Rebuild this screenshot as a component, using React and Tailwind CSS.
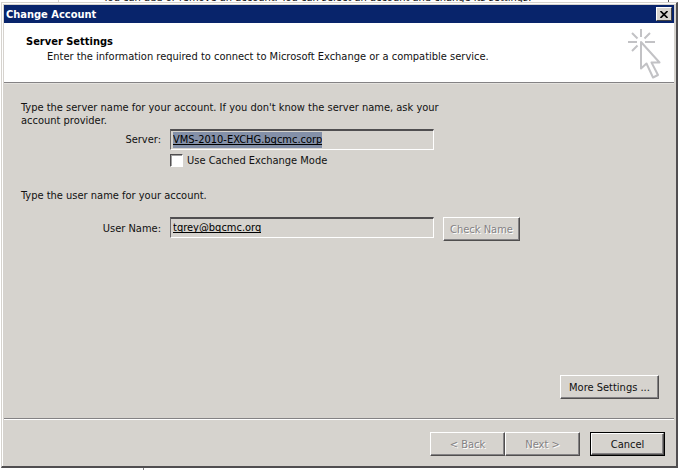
const raised =
  "h-6 border border-t-white border-l-white border-r-[#504e4e] border-b-[#504e4e] bg-[#d6d3ce] shadow-[inset_-1px_-1px_0_#848284] text-center";
const disabledText = "text-[#848284] [text-shadow:1px_1px_0_#fff]";
const sunken =
  "flex h-[21px] w-[264px] items-start border-t-2 border-l border-r border-b border-t-[#504e50] border-l-[#6a686a] border-r-white border-b-white bg-[#d6d3ce] pt-px pl-0.5";
const fieldText =
  "field-sizing-content h-4 leading-4 text-black underline decoration-1 [text-decoration-skip-ink:none] outline-none";

function ClickCursor() {
  return (
    <svg width="36" height="52" viewBox="0 0 36 52" fill="none" stroke="#c2c2c5" strokeWidth="2" aria-hidden="true">
      <path d="M15 1v8M2 14h9M19 14h10M6 5l5.500 5.500M24 5l-5.500 5.500M6 23l5.500-5.500" />
      <path d="M15 14v26.500l5.500-5 6.500 14 5-2.500-6.500-12.500h8z" strokeLinejoin="round" />
    </svg>
  );
}

function TitleBar() {
  return (
    <div className="flex h-[18px] items-center justify-between bg-[#08246b] pr-0.5 pl-0.5">
      <h1 className="font-bold text-white">Change Account</h1>
      <button
        type="button"
        aria-label="Close"
        className="flex h-[14px] w-4 items-center justify-center border border-t-white border-l-white border-r-[#404040] border-b-[#404040] bg-[#d6d3ce]"
      >
        <svg width="8" height="7" viewBox="0 0 8 7" stroke="#000" strokeWidth="1.6" aria-hidden="true">
          <path d="M0.500 0l7 7M7.500 0l-7 7" />
        </svg>
      </button>
    </div>
  );
}

function Header() {
  return (
    <header className="flex h-[59px] justify-between bg-white pt-[5px] pr-3 pl-[22px]">
      <div className="pt-1.5 leading-[15px]">
        <h2 className="font-bold text-black">Server Settings</h2>
        <p className="pl-[21px]">Enter the information required to connect to Microsoft Exchange or a compatible service.</p>
      </div>
      <ClickCursor />
    </header>
  );
}

function Settings() {
  return (
    <main className="flex flex-1 flex-col pt-[17px] pr-[15px] pl-[17px]">
      <p className="max-w-[430px] leading-[13px]">
        Type the server name for your account. If you don't know the server name, ask your account provider.
      </p>
      <div className="mt-0.5 flex items-center">
        <label htmlFor="server" className="w-[140px] text-right">Server:</label>
        <div className={`${sunken} ml-[9px]`}>
          <input id="server" readOnly defaultValue="VMS-2010-EXCHG.bqcmc.corp" className={`${fieldText} bg-[#8490a8]`} />
        </div>
      </div>
      <div className="mt-1 ml-[149px] flex h-[13px] items-center gap-1">
        <input
          id="cached"
          type="checkbox"
          className="size-[13px] appearance-none border border-t-[#504e50] border-l-[#504e50] border-r-white border-b-white bg-white shadow-[inset_1px_1px_0_#a0a0a0]"
        />
        <label htmlFor="cached">Use Cached Exchange Mode</label>
      </div>
      <p className="mt-[22px] leading-[13px]">Type the user name for your account.</p>
      <div className="mt-[15px] flex items-start">
        <label htmlFor="user" className="w-[140px] pt-[5px] text-right">User Name:</label>
        <div className={`${sunken} ml-[9px]`}>
          <input id="user" readOnly defaultValue="tqrey@bqcmc.orq" className={fieldText} />
        </div>
        <button type="button" disabled className={`${raised} ${disabledText} ml-[9px] w-[77px]`}>Check Name</button>
      </div>
      <button type="button" className={`${raised} mt-auto mb-[19px] w-[99px] self-end`}>More Settings ...</button>
    </main>
  );
}

function Footer() {
  return (
    <footer className="flex h-[47px] justify-end border-t border-white pt-3 pr-[9px]">
      <button type="button" disabled className={`${raised} ${disabledText} w-[75px]`}>&lt; Back</button>
      <button type="button" disabled className={`${raised} ${disabledText} w-[75px]`}>Next &gt;</button>
      <div className="ml-2.5 h-6 border border-black">
        <button type="button" className={`${raised} block h-[22px] w-[73px]`}>Cancel</button>
      </div>
    </footer>
  );
}

export default function App() {
  return (
    <div className="flex h-screen flex-col bg-white font-['DejaVu_Sans_Condensed','DejaVu_Sans',sans-serif] text-[11px] leading-[13px] text-[#111]">
      <div className="flex h-0.5 items-end overflow-hidden">
        <p className="ml-[58px] w-[611px] border-x border-l-[#d6d3ce] border-r-[#504e4e] pl-[44px] leading-2">
          You can add or remove an account. You can select an account and change its settings.
        </p>
      </div>
      <section className="ml-px flex flex-1 flex-col border-t border-r-2 border-b-2 border-l border-t-[#d6d3ce] border-l-[#d6d3ce] border-r-[#504e50] border-b-[#504e50] bg-[#d6d3ce]">
        <div className="flex flex-1 flex-col border-t border-l border-white pt-px pr-0.5 pl-px">
          <TitleBar />
          <Header />
          <div className="h-px bg-[#848284]" />
          <div className="h-px bg-[#e4e2de]" />
          <Settings />
          <div className="h-px bg-[#848284]" />
          <Footer />
        </div>
      </section>
      <div className="ml-[143px] h-0.5 border-l border-[#848284]" />
    </div>
  );
}
